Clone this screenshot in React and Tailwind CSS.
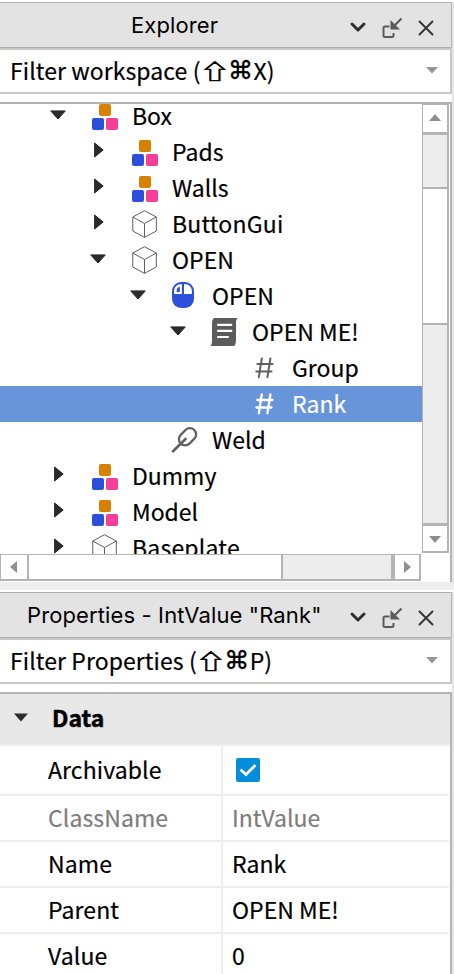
const UI = "font-['Noto_Sans_CJK_SC','Noto_Sans',sans-serif]";

function Arrow({ open }) {
  return (
    <svg width="20" height="36" className="shrink-0" fill="#2b2b2b" stroke="#2b2b2b" strokeLinejoin="round">
      {open ? <path d="M2.7 12.9h14.6L10 21z" /> : <path d="M6.6 9v14l8.6-7z" />}
    </svg>
  );
}

function Model() {
  return (
    <>
      <rect x="11" y="6" width="12" height="12" rx="2" fill="#d68200" />
      <rect x="4" y="20" width="12" height="12" rx="2" fill="#2d50da" />
      <rect x="18" y="20" width="12" height="12" rx="2" fill="#f43e99" />
    </>
  );
}

function Cube() {
  return (
    <path
      d="M16.5 4.7L28.3 11v14l-11.8 6.4L4.8 25V11zM4.8 11l11.7 6.5L28.3 11M16.5 17.5v13.9"
      fill="none"
      stroke="#606060"
      strokeLinejoin="round"
    />
  );
}

function Mouse() {
  return (
    <>
      <rect x="4" y="4" width="22" height="26" rx="9" fill="#2d50da" />
      <path d="M6 16v-2.500C6 9 9 6 13.900 6v10z" fill="#fff" />
      <path d="M16 6c5 0 7.900 3 7.900 7.500V16H16z" fill="#fff" />
      <path d="M8.600 14v-1c0-2.400 1.200-4 3.200-4.300V14z" fill="#2d50da" />
    </>
  );
}

function Script() {
  return (
    <>
      <path d="M6 4h24c-1.4 1-2 2.2-2 4v17c0 3-.3 5-1.7 7H2.3C3.5 31 4 29.5 4 27V9.5C4 7 4.5 5.3 6 4z" fill="#5c5c5c" />
      <path d="M10 10.8h13.3M10 16.9h13.3M10 23h10" stroke="#fff" strokeWidth="2.2" strokeLinecap="round" />
    </>
  );
}

function Hash({ active }) {
  return (
    <path
      d="M9.3 14h15.2M8.3 21.5h15.2M13.8 8.5l-3 18.7M22.4 8.5l-3 18.7"
      stroke={active ? "#fff" : "#606060"}
      strokeWidth={active ? 2.3 : 2}
      strokeLinecap="round"
      fill="none"
    />
  );
}

function Weld() {
  return (
    <g fill="none" stroke="#606060" strokeWidth="2.3">
      <rect x="9.9" y="8.6" width="19.2" height="12.4" rx="6.2" transform="rotate(-45 19.5 14.8)" />
      <path d="M5 29.2L17.5 17" strokeWidth="2.7" strokeLinecap="round" />
    </g>
  );
}

const tree = [
  { name: "Box", pad: "pl-[48px]", arrow: "open", Icon: Model },
  { name: "Pads", pad: "pl-[88px]", arrow: "closed", Icon: Model },
  { name: "Walls", pad: "pl-[88px]", arrow: "closed", Icon: Model },
  { name: "ButtonGui", pad: "pl-[88px]", arrow: "closed", Icon: Cube, spacing: "tracking-[0.2px]" },
  { name: "OPEN", pad: "pl-[88px]", arrow: "open", Icon: Cube },
  { name: "OPEN", pad: "pl-[128px]", arrow: "open", Icon: Mouse },
  { name: "OPEN ME!", pad: "pl-[168px]", arrow: "open", Icon: Script },
  { name: "Group", pad: "pl-[228px]", Icon: Hash },
  { name: "Rank", pad: "pl-[228px]", Icon: Hash, active: true },
  { name: "Weld", pad: "pl-[148px]", Icon: Weld },
  { name: "Dummy", pad: "pl-[48px]", arrow: "closed", Icon: Model },
  { name: "Model", pad: "pl-[48px]", arrow: "closed", Icon: Model },
  { name: "Baseplate", pad: "pl-[48px]", arrow: "closed", Icon: Cube, spacing: "tracking-[0.2px]" },
];

function TreeRow({ name, pad, arrow, Icon, active, spacing = "" }) {
  return (
    <div className={`flex h-9 shrink-0 items-center ${pad} ${active ? "bg-[#6894d9] text-white" : ""}`}>
      {arrow && <Arrow open={arrow === "open"} />}
      <svg width="36" height="36" className="ml-5 mr-2 shrink-0">
        <Icon active={active} />
      </svg>
      <span className={`-mt-[2px] whitespace-nowrap leading-9 ${spacing}`}>{name}</span>
    </div>
  );
}

function Header({ title, inset }) {
  return (
    <div className="flex h-[46px] shrink-0 border-y border-r border-[#b0b0b0] bg-[#e3e3e3]">
      <div className={`flex-1 whitespace-nowrap font-['Inter',sans-serif] text-[22px] leading-[45px] tracking-[0.12px] [-webkit-text-stroke:0px] ${inset}`}>{title}</div>
      <svg width="103" height="44" className="shrink-0" fill="none">
        <path d="M4 21l6 6 6-6" stroke="#2e2e2e" strokeWidth="3" strokeLinecap="round" strokeLinejoin="round" />
        <path d="M41.500 23.500H37q-1.500 0-1.500 1.500v7.500q0 1.500 1.500 1.500h7q1.500 0 1.500-1.500V30" stroke="#5a5a5a" strokeWidth="2" />
        <path d="M53.500 15.500l-8 8" stroke="#5a5a5a" strokeWidth="2.200" />
        <path d="M42.500 17v9.500h9.500z" fill="#5a5a5a" />
        <path d="M71.500 18.500l13 13M84.500 18.500l-13 13" stroke="#333" strokeWidth="1.900" strokeLinecap="round" />
      </svg>
    </div>
  );
}

function Filter({ label, letter }) {
  return (
    <div className="flex h-[46px] shrink-0 items-center border-y-2 border-r-2 border-[#c8c8c8] bg-white pl-[10px]">
      <span className="-mt-[2px] whitespace-nowrap leading-[42px] tracking-[0.08px]">{label} (</span>
      <span className="-mt-[2px] ml-px flex w-[26px] scale-x-[1.25] scale-y-[0.84] justify-center text-[25px] leading-[42px] [-webkit-text-stroke:0.7px]">⇧</span>
      <span className="flex w-[26px] justify-center font-['DejaVu_Sans',sans-serif] text-[25px] leading-[42px] [-webkit-text-stroke:0.4px]">⌘</span>
      <span className="-mt-[2px] flex-1 leading-[42px]">{letter})</span>
      <svg width="14" height="10" className="mr-[11px] shrink-0 -translate-y-px">
        <path d="M1 2h12L7 8.500z" fill="#969696" />
      </svg>
    </div>
  );
}

function Tip({ d }) {
  return (
    <svg width="14" height="14">
      <path d={d} fill="#8f8f8f" />
    </svg>
  );
}

function VScroll() {
  return (
    <div className="flex h-[449px] w-[27px] shrink-0 flex-col border-l border-r-2 border-t border-[#b4b4b4] bg-[#ededed]">
      <div className="flex h-[30px] shrink-0 items-center justify-center border-b-[3px] border-[#b4b4b4] bg-white">
        <Tip d="M1 9h12L7 2z" />
      </div>
      <div className="h-[52px] shrink-0" />
      <div className="h-[138px] shrink-0 border-y-2 border-[#b4b4b4] bg-white" />
      <div className="flex-1" />
      <div className="flex h-[30px] shrink-0 items-center justify-center border-b-2 border-t-[3px] border-[#b4b4b4] bg-white">
        <Tip d="M1 4h12L7 11z" />
      </div>
    </div>
  );
}

function HScroll() {
  return (
    <div className="flex h-[27px] w-[421px] shrink-0 border-b-2 border-l border-r-2 border-t border-[#b4b4b4] bg-[#ededed]">
      <div className="flex w-[28px] shrink-0 items-center justify-center border-r-2 border-[#b4b4b4] bg-white">
        <Tip d="M10 1v12L3 7z" />
      </div>
      <div className="w-[254px] shrink-0 border-r-2 border-[#b4b4b4] bg-white" />
      <div className="flex-1" />
      <div className="flex w-[28px] shrink-0 items-center justify-center border-l-4 border-[#b4b4b4] bg-white">
        <Tip d="M4 1v12l7-6z" />
      </div>
    </div>
  );
}

function Explorer() {
  return (
    <section className="flex h-[580px] w-[452px] shrink-0 flex-col bg-white">
      <Header title="Explorer" inset="pl-[131px]" />
      <Filter label="Filter workspace" letter="X" />
      <div className="mt-2 flex h-[480px] shrink-0 flex-col overflow-hidden border-r-2 border-t-2 border-[#b4b4b4]">
        <div className="flex h-[450px] shrink-0">
          <div className="flex w-[422px] shrink-0 flex-col overflow-hidden">
            <div className="-mt-[6px] flex flex-col">
              {tree.map((row, i) => (
                <TreeRow key={i} {...row} />
              ))}
            </div>
          </div>
          <VScroll />
        </div>
        <HScroll />
      </div>
    </section>
  );
}

const props = [
  { name: "Archivable", h: "h-[50px]", check: true },
  { name: "ClassName", h: "h-[46px]", value: "IntValue", muted: true },
  { name: "Name", h: "h-[46px]", value: "Rank" },
  { name: "Parent", h: "h-[46px]", value: "OPEN ME!" },
  { name: "Value", h: "h-[46px]", value: "0" },
];

function Properties() {
  return (
    <section className="flex w-[452px] flex-1 flex-col overflow-hidden bg-white">
      <Header title={'Properties - IntValue "Rank"'} inset="pl-[27px]" />
      <Filter label="Filter Properties" letter="P" />
      <div className="mt-2 flex flex-1 flex-col overflow-hidden border-r-2 border-t-2 border-[#b4b4b4]">
        <div className="flex h-[52px] shrink-0 items-center border-b-2 border-[#eee] bg-[#e8e8e8] pl-[13px]">
          <svg width="16" height="12" className="-mt-[3px] mr-[23px] shrink-0">
            <path d="M1 1.500h14L8 9.500z" fill="#2b2b2b" />
          </svg>
          <span className="-mt-[4px] font-bold [-webkit-text-stroke:0.5px]">Data</span>
        </div>
        {props.map((p) => (
          <div key={p.name} className={`mr-px flex shrink-0 border-b-2 border-[#eee] ${p.h} ${p.muted ? "text-[#7d7d7d]" : ""}`}>
            <div className="flex w-[223px] shrink-0 items-center border-r-2 border-[#eee] pb-[2px] pl-12 tracking-[0.1px]">{p.name}</div>
            <div className="flex flex-1 items-center pl-[9px]">
              {p.check ? (
                <svg width="24" height="24" className="ml-1">
                  <rect width="24" height="24" rx="2" fill="#048cdd" />
                  <path d="M4.500 11.500l5.500 5 9.500-9.500" stroke="#fff" strokeWidth="2.800" fill="none" />
                </svg>
              ) : (
                <span className="-mt-[2px]">{p.value}</span>
              )}
            </div>
          </div>
        ))}
      </div>
    </section>
  );
}

export default function App() {
  return (
    <div className={`flex h-[974px] w-[454px] flex-col overflow-hidden bg-[#e6e6e6] text-[23px] text-black [-webkit-text-stroke:0.2px] ${UI}`}>
      <div className="h-[2px] shrink-0 bg-white" />
      <Explorer />
      <div className="h-2 shrink-0 bg-[#ededed]" />
      <div className="h-[2px] shrink-0 bg-white" />
      <Properties />
    </div>
  );
}
